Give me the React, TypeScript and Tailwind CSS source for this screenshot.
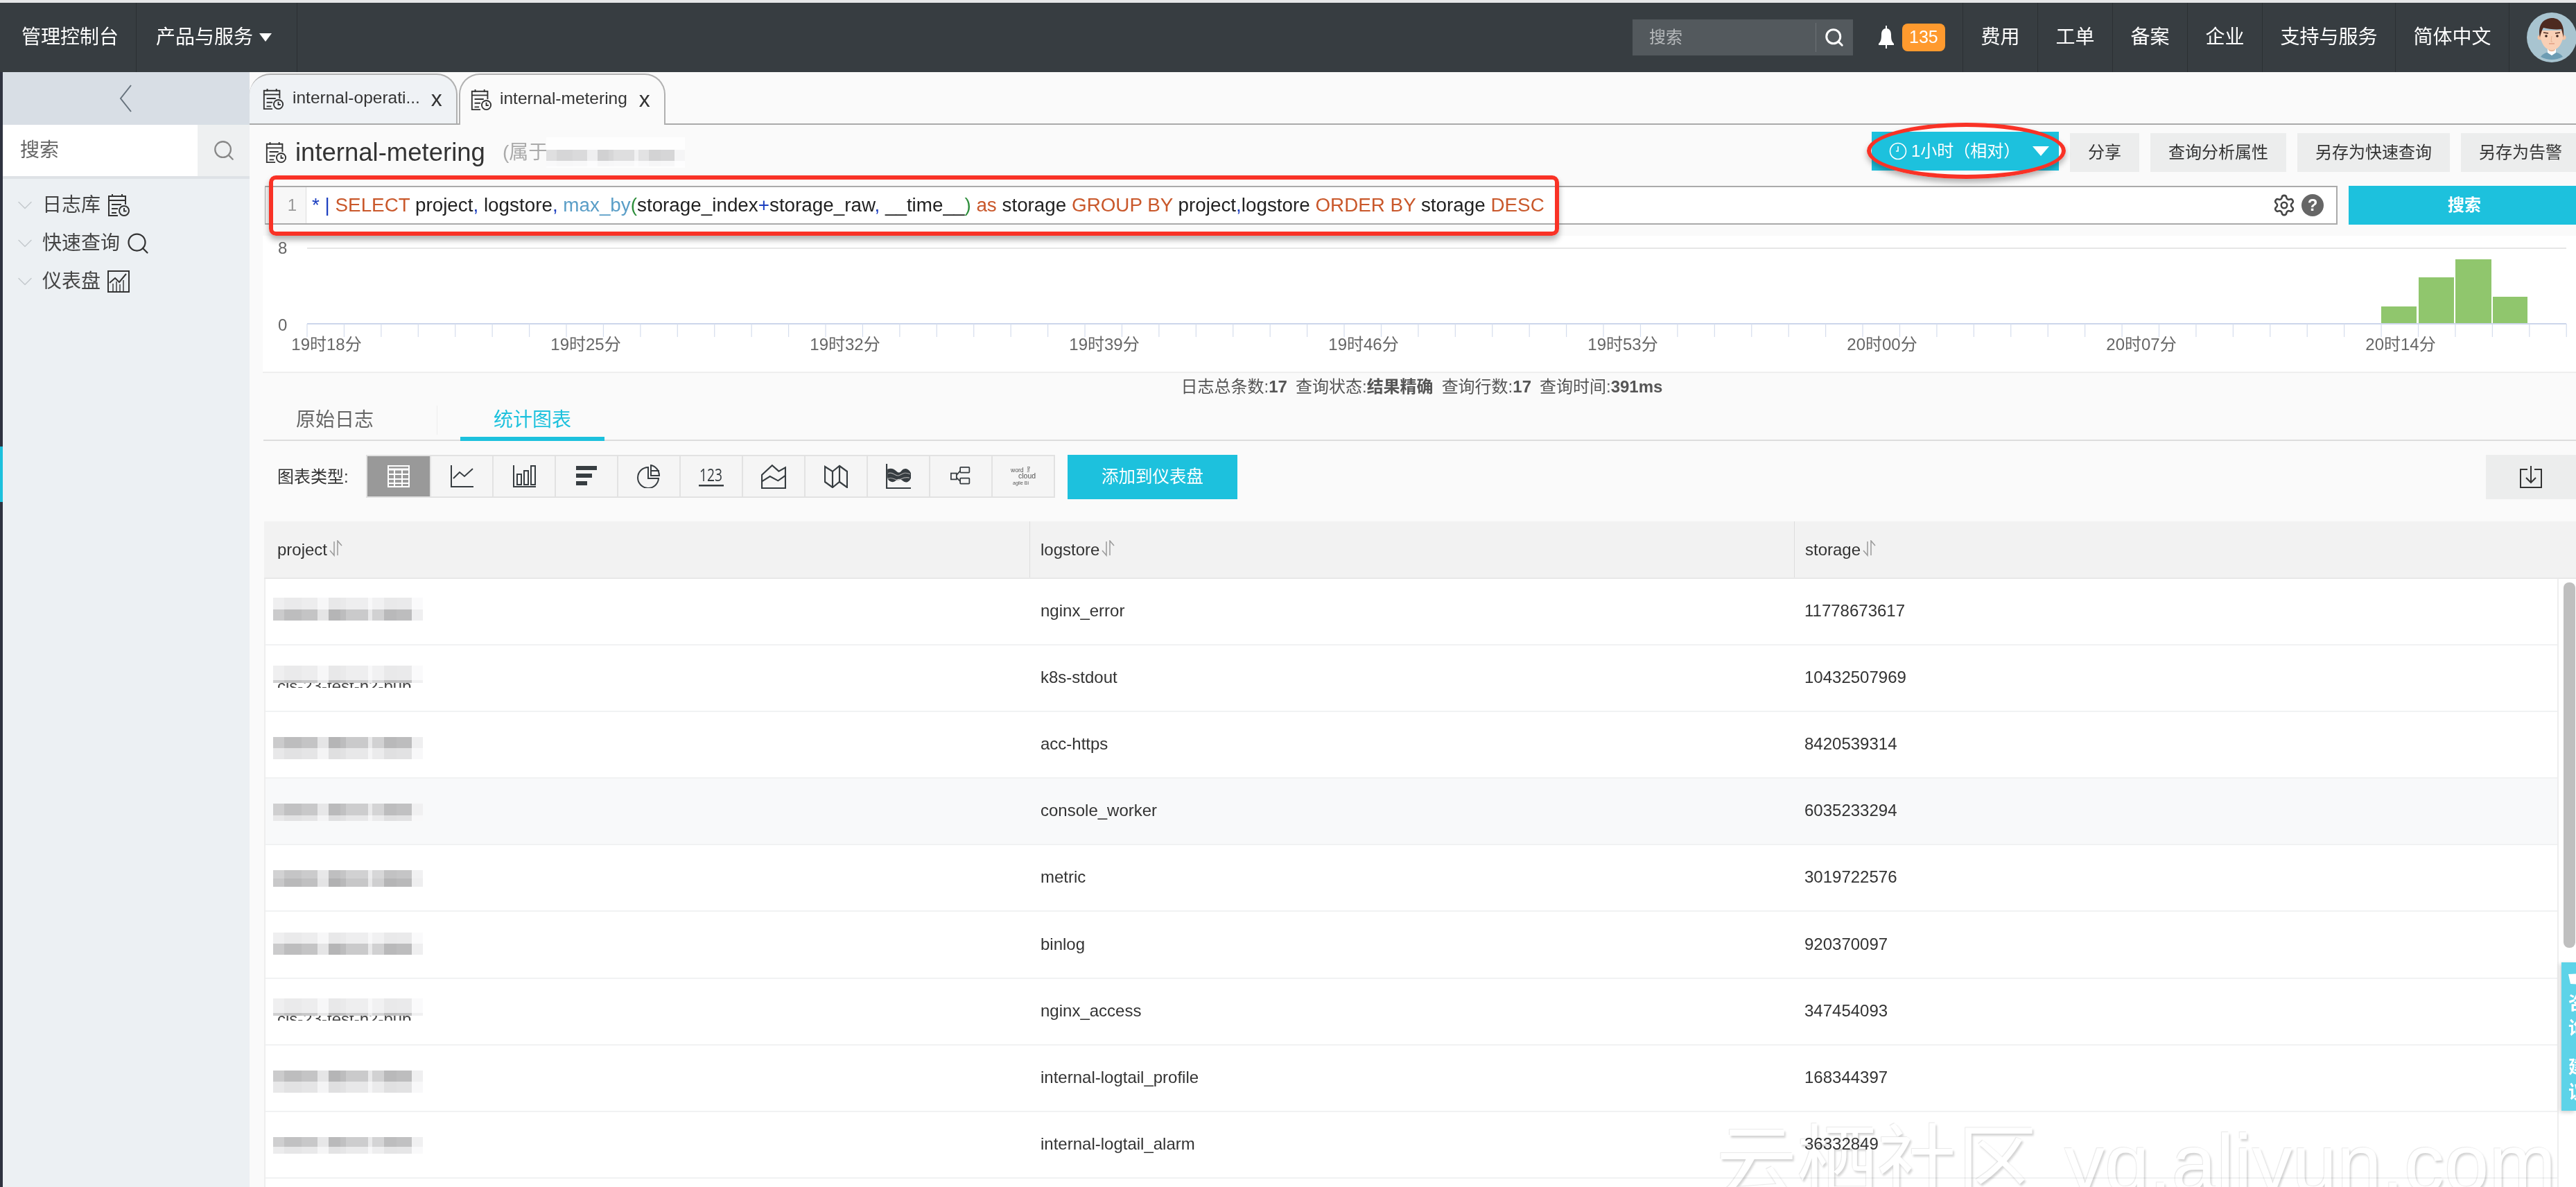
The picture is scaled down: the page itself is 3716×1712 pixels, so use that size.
import { Search, Settings, ChevronDown } from 'lucide-react'

const navItems = ['费用', '工单', '备案', '企业', '支持与服务', '简体中文']

const rows = [
  { store: 'nginx_error', size: '11778673617', top: 0.25, bot: 0.8, th: 17, bh: 16, shift: -7 },
  { store: 'k8s-stdout', size: '10432507969', top: 0.25, bot: 0.75, th: 21, bh: 4, shift: -4, peek: true },
  { store: 'acc-https', size: '8420539314', top: 0.8, bot: 0.35, th: 16, bh: 16, shift: 10 },
  { store: 'console_worker', size: '6035233294', top: 0.75, bot: 0.35, th: 17, bh: 8, shift: 3, alt: true },
  { store: 'metric', size: '3019722576', top: 0.7, bot: 0.85, th: 12, bh: 12, shift: 2 },
  { store: 'binlog', size: '920370097', top: 0.25, bot: 0.8, th: 16, bh: 16, shift: -4 },
  { store: 'nginx_access', size: '347454093', top: 0.25, bot: 0.75, th: 21, bh: 4, shift: -6, peek: true },
  { store: 'internal-logtail_profile', size: '168344397', top: 0.8, bot: 0.35, th: 16, bh: 16, shift: 10 },
  { store: 'internal-logtail_alarm', size: '36332849', top: 0.75, bot: 0.3, th: 14, bh: 10, shift: 2 },
  { store: '', size: '', top: 0, bot: 0, th: 0, bh: 0, shift: 0 },
]

// widths and strengths of the mosaic tiles over the project names
const tiles = [
  [16, 0.7], [25, 0.9], [23, 0.8], [16, 0.35], [17, 1], [8, 0.9], [32, 0.72], [6, 0.3], [17, 0.62], [18, 0.95], [22, 0.9], [16, 0.22],
]

const labels = ['19时18分', '19时25分', '19时32分', '19时39分', '19时46分', '19时53分', '20时00分', '20时07分', '20时14分']
const ticks = Array.from({ length: 62 }, (_, i) => 64 + i * 53.43)

function Mosaic({ top, bot, th, bh, shift }: { top: number; bot: number; th: number; bh: number; shift: number }) {
  const paint = (base: number, k: number) => {
    const v = Math.round(255 - 92 * base * k)
    return `rgb(${v},${v},${v + 1})`
  }
  return (
    <div className="flex flex-col" style={{ marginTop: shift }}>
      <div className="flex">
        {tiles.map(([w, k], i) => (
          <div key={i} style={{ width: w, height: th, backgroundColor: paint(top, k) }} />
        ))}
      </div>
      <div className="flex">
        {tiles.map(([w, k], i) => (
          <div key={i} style={{ width: w, height: bh, backgroundColor: paint(bot, k) }} />
        ))}
      </div>
    </div>
  )
}

function LogIcon({ className = 'w-[32px] h-[34px]' }: { className?: string }) {
  return (
    <svg viewBox="0 0 32 34" className={className} fill="none" stroke="#333" strokeWidth="2">
      <path d="M15 32H2V4h24v12" />
      <path d="M7 1v4M21 1v4M2 10h24M6 16h14M6 22h9M6 28h7" />
      <circle cx="24" cy="25" r="7" />
      <path d="M24 21v4.5h3.5" />
    </svg>
  )
}

function SortIcon() {
  return (
    <svg viewBox="0 0 24 24" className="ml-[1px] -mt-[4px] h-[24px] w-[24px]" fill="none" stroke="#999" strokeWidth="1.5">
      <path d="M9 2v20L3 15" />
      <path d="M14 22V1l6 7" />
    </svg>
  )
}

function TypeIcon({ kind }: { kind: number }) {
  const c = '#373d41'
  const common = { viewBox: '0 0 34 34', className: 'w-[34px] h-[34px]', fill: 'none', stroke: c, strokeWidth: 2 }
  if (kind === 0)
    return (
      <svg {...common} stroke="#fff">
        <rect x="2" y="2" width="30" height="30" />
        <path d="M2 7h30" strokeWidth="3" />
        <path d="M2 14h30M2 21h30M2 27h30M11 8v24M22 8v24" strokeWidth="2" />
      </svg>
    )
  if (kind === 1)
    return (
      <svg {...common}>
        <path d="M2 1v31h32" />
        <path d="M5 20l9-9 7 6 12-11" />
      </svg>
    )
  if (kind === 2)
    return (
      <svg {...common}>
        <path d="M2 1v31h32" />
        <rect x="7" y="14" width="6" height="15" />
        <rect x="17" y="9" width="6" height="20" />
        <rect x="27" y="2" width="6" height="27" />
      </svg>
    )
  if (kind === 3)
    return (
      <svg {...common} fill={c} stroke="none">
        <rect x="2" y="2" width="30" height="6" />
        <rect x="2" y="13" width="23" height="6" />
        <rect x="2" y="24" width="16" height="6" />
      </svg>
    )
  if (kind === 4)
    return (
      <svg {...common}>
        <path d="M16 4a15 15 0 1 0 15 16H16z" />
        <path d="M20 1v15h12a15 15 0 0 0-12-15zM20 9h12" />
      </svg>
    )
  if (kind === 5)
    return (
      <svg viewBox="0 0 36 34" className="h-[34px] w-[36px]">
        <text x="1" y="24" fontSize="25" fill={c} fontFamily="'Open Sans', sans-serif" textLength="33" lengthAdjust="spacingAndGlyphs">123</text>
        <rect x="0" y="29" width="36" height="2.5" fill={c} />
      </svg>
    )
  if (kind === 6)
    return (
      <svg {...common} className="h-[36px] w-[36px]">
        <path d="M1 33V15L15 2l9 8 9-5v28z" />
        <path d="M1 24l11-7 11 6 10-7" />
      </svg>
    )
  if (kind === 7)
    return (
      <svg {...common} className="h-[34px] w-[34px]" strokeWidth="2.2">
        <path d="M1 3l11 7 10-8 11 8v23l-11-8-10 8-11-8z" />
        <path d="M12 10v23M22 2v23" />
      </svg>
    )
  if (kind === 8)
    return (
      <svg {...common} className="h-[36px] w-[36px]">
        <path d="M1 0v33h35" />
        <path d="M3 8c5-2 8 0 11 3s6 2 8-1 8-5 12 5c-1 9-7 11-11 7s-7-3-10 0-9 2-10-4z" fill={c} />
        <path d="M3 13c6-3 10 4 14 3s8-6 16-2M3 20c6-3 10 3 14 2s8-5 15-3" stroke="#aaa" strokeWidth="1" />
      </svg>
    )
  if (kind === 9)
    return (
      <svg {...common} className="h-[30px] w-[32px]">
        <rect x="1" y="12" width="9" height="10" />
        <rect x="16" y="2" width="15" height="9" rx="1" />
        <rect x="16" y="20" width="15" height="9" rx="1" />
        <path d="M10 15l6-7M10 19l6 6" />
      </svg>
    )
  return (
    <svg viewBox="0 0 40 34" className="h-[34px] w-[40px]" fontFamily="'Liberation Sans', sans-serif" fill="#555">
      <text x="2" y="11" fontSize="8.6">word</text>
      <text x="13" y="20" fontSize="10.5">cloud</text>
      <text x="5" y="29" fontSize="7">agile Bi</text>
      <text fontSize="6" transform="translate(29 11) rotate(-90)">tag</text>
    </svg>
  )
}

function Avatar() {
  return (
    <svg viewBox="0 0 72 72" className="h-[72px] w-[72px] shrink-0">
      <circle cx="36" cy="36" r="36" fill="#a8c4d0" />
      <path d="M20 64c4-6 10-7 16-7s12 1 16 7a36 36 0 0 1-32 0z" fill="#6d9cb3" />
      <path d="M30 50h12v8l-6 4-6-4z" fill="#fff" />
      <path d="M31 48h10v6c-2 3-8 3-10 0z" fill="#eab89a" />
      <circle cx="19" cy="36" r="3.5" fill="#f3c3a4" />
      <circle cx="53" cy="36" r="3.5" fill="#f3c3a4" />
      <path d="M19 26c0 18 7 28 17 28s17-10 17-28z" fill="#f9d0b6" />
      <path d="M19 36c-3-14 1-26 16-28 11-1 20 7 18 28-1-4-2-8-3-12-8 1-18 0-26-2-2 3-4 9-5 14z" fill="#4d2a20" />
      <circle cx="28" cy="34" r="1.8" fill="#3a211a" />
      <circle cx="44" cy="34" r="1.8" fill="#3a211a" />
      <path d="M24 29l7 1M48 29l-7 1" stroke="#4d2a20" strokeWidth="1.4" />
      <path d="M36 34l-1 8h2" stroke="#e0a988" strokeWidth="0.8" fill="none" />
      <path d="M32 45h8" stroke="#e09c80" strokeWidth="1.4" />
    </svg>
  )
}

function Token({ c, children }: { c: 'k' | 'f' | 'p' | 'g'; children: string }) {
  if (c === 'k') return <span className="text-[#c9582b]">{children}</span>
  if (c === 'f') return <span className="text-[#5a9ec7]">{children}</span>
  if (c === 'p') return <span className="text-[#1c3fc0]">{children}</span>
  return <span className="text-[#2f8f3d]">{children}</span>
}

export default function App() {
  return (
    <div className="relative flex h-[1712px] w-[3716px] flex-col overflow-hidden bg-[#fafafa] font-['Liberation_Sans','Noto_Sans_CJK_SC',sans-serif] text-[24px] text-[#333]">
      <div className="h-[4px] shrink-0 bg-[#e6e7e8]" />

      {/* top nav */}
      <header className="flex h-[100px] shrink-0 items-center bg-[#373d41] text-[28px] text-white">
        <div className="flex h-full w-[197px] items-center border-r border-[#2b3033] pl-[31px]">管理控制台</div>
        <div className="flex h-full w-[232px] items-center border-r border-[#2b3033] pl-[28px]">
          产品与服务
          <svg viewBox="0 0 18 14" className="ml-[9px] h-[14px] w-[18px]">
            <path d="M0 1h18L9 13z" fill="#fff" />
          </svg>
        </div>
        <div className="ml-auto flex h-full items-center">
          <div className="flex h-[52px] w-[318px] items-center bg-[#53595d] text-[24px] text-[#b5b8ba]">
            <span className="flex-1 pl-[24px]">搜索</span>
            <div className="flex h-[42px] w-[54px] items-center justify-center border-l border-[#6d7276]">
              <Search className="h-[30px] w-[30px] text-white" strokeWidth={2.4} />
            </div>
          </div>
          <svg viewBox="0 0 28 34" className="ml-[34px] h-[34px] w-[28px]">
            <path d="M14 4c-4 0-7 3-7 9 0 7-1 10-4 13v2h22v-2c-3-3-4-6-4-13 0-6-3-9-7-9z" fill="#fff" />
            <rect x="13" y="0" width="2" height="5" fill="#fff" />
            <rect x="13" y="28" width="2" height="5" fill="#fff" />
          </svg>
          <div className="ml-[9px] flex h-[40px] w-[62px] items-center justify-center rounded-[8px] bg-[#ff9a2e] text-[25px]">135</div>
          <nav className="ml-[25px] flex h-full">
            {navItems.map(item => (
              <div key={item} className="flex items-center border-l border-[#2b3033] px-[25.5px]">
                {item}
              </div>
            ))}
          </nav>
          <div className="flex h-full w-[97px] items-center border-l border-[#2b3033] pl-[25px]">
            <Avatar />
          </div>
        </div>
      </header>

      <div className="flex min-h-0 flex-1">
        {/* left strip */}
        <div className="flex w-[4px] shrink-0 flex-col bg-[#2f3340]">
          <div className="mt-[540px] h-[80px] bg-[#1dc1dd]" />
        </div>

        {/* sidebar */}
        <aside className="w-[356px] shrink-0 bg-[#ecf0f3]">
          <div className="flex h-[76px] items-center justify-center bg-[#d8dee5] pr-[2px]">
            <svg viewBox="0 0 20 40" className="h-[40px] w-[20px]" fill="none" stroke="#66727c" strokeWidth="2">
              <path d="M18 1L3 20l15 19" />
            </svg>
          </div>
          <div className="flex h-[78px] border-b-[4px] border-[#dee2e6] bg-white">
            <div className="flex flex-1 items-center pl-[25px] text-[28px] text-[#666]">搜索</div>
            <div className="flex w-[75px] items-center justify-center bg-[#eef0f1]">
              <Search className="h-[34px] w-[34px] text-[#888]" strokeWidth={1.6} />
            </div>
          </div>
          <div className="flex flex-col pt-[10px] text-[28px] text-[#444]">
            <div className="flex h-[56px] items-center pl-[14px]">
              <ChevronDown className="h-[36px] w-[36px] text-[#c4c9cd]" strokeWidth={1} />
              <span className="ml-[7px]">日志库</span>
              <LogIcon className="ml-[10px] h-[34px] w-[32px]" />
            </div>
            <div className="flex h-[54px] items-center pl-[14px]">
              <ChevronDown className="h-[36px] w-[36px] text-[#c4c9cd]" strokeWidth={1} />
              <span className="ml-[7px]">快速查询</span>
              <Search className="ml-[8px] h-[36px] w-[36px] text-[#333]" strokeWidth={1.5} />
            </div>
            <div className="flex h-[56px] items-center pl-[14px]">
              <ChevronDown className="h-[36px] w-[36px] text-[#c4c9cd]" strokeWidth={1} />
              <span className="ml-[7px]">仪表盘</span>
              <svg viewBox="0 0 32 32" className="ml-[10px] h-[32px] w-[32px]" fill="none" stroke="#333" strokeWidth="2">
                <rect x="1" y="1" width="30" height="30" />
                <path d="M3 18l8-7 6 6 10-12" />
                <path d="M8 30V19M13 30V16M18 30V20M23 30V14" strokeWidth="1.4" />
              </svg>
            </div>
          </div>
        </aside>

        {/* main */}
        <main className="flex min-w-0 flex-1 flex-col">
          <div className="flex h-[76px] shrink-0 items-end gap-[2px] border-b-2 border-[#aaa]">
            <div className="flex h-[72px] w-[300px] items-center rounded-tl-[30px] rounded-tr-[30px] border-r-2 border-t-2 border-[#b0b0b0] bg-[#eff2f5] pl-[18px]">
              <LogIcon className="h-[32px] w-[32px]" />
              <span className="ml-[12px] -mt-[4px] text-[24.5px]">internal-operati...</span>
              <span className="ml-[16px] -mt-[2px] text-[32px] leading-none">x</span>
            </div>
            <div className="-mb-[2px] flex h-[74px] w-[298px] items-center rounded-tl-[30px] rounded-tr-[30px] border-x-2 border-t-2 border-[#b0b0b0] bg-[#fafafa] pl-[14px]">
              <LogIcon className="h-[32px] w-[32px]" />
              <span className="ml-[11px] -mt-[4px] text-[24.5px]">internal-metering</span>
              <span className="ml-[17px] -mt-[2px] text-[32px] leading-none">x</span>
            </div>
          </div>

          <div className="flex h-[88px] shrink-0 items-start pl-[22px] pt-[12px]">
            <div className="flex h-[56px] flex-1 items-center">
              <LogIcon className="h-[32px] w-[32px]" />
              <span className="ml-[12px] text-[36.5px]">internal-metering</span>
              <span className="ml-[25px] text-[28px] text-[#aaa]">(属于</span>
              <div className="-ml-[2px] flex h-[44px] w-[200px] flex-col bg-white/70">
                <div className="h-[18px]" />
                <Mosaic top={0.5} bot={0.1} th={16} bh={8} shift={0} />
              </div>
            </div>
            <div className="-mr-[6px] flex shrink-0 gap-[16px]">
              <div className="-mt-[2px] flex h-[56px] w-[270px] items-center bg-[#1dc1dd] pl-[25px] text-white">
                <svg viewBox="0 0 26 26" className="h-[26px] w-[26px]" fill="none" stroke="#fff" strokeWidth="1.6">
                  <circle cx="13" cy="13" r="11.5" />
                  <path d="M13 6v7h-3" />
                </svg>
                <span className="ml-[6px]">1小时（相对）</span>
                <svg viewBox="0 0 24 14" className="ml-[18px] h-[14px] w-[24px]">
                  <path d="M0 0h24L12 14z" fill="#fff" />
                </svg>
              </div>
              {['分享', '查询分析属性', '另存为快速查询', '另存为告警'].map(t => (
                <div key={t} className="flex h-[56px] items-center bg-[#eceded] px-[26px]">
                  {t}
                </div>
              ))}
            </div>
          </div>

          <div className="flex h-[72px] shrink-0 items-start pl-[22px]">
            <div className="flex h-[56px] w-[2990px] items-center border-y-2 border-r-2 border-l border-[#aaa] bg-white">
              <div className="flex h-full w-[59px] items-center justify-end border-r border-[#ddd] bg-[#f7f7f7] pr-[13px] text-[#999]">1</div>
              <div className="flex-1 whitespace-pre pl-[8px] text-[27.82px] text-[#222]">
                <Token c="p">*</Token> <Token c="p">|</Token> <Token c="k">SELECT</Token> project<Token c="p">,</Token> logstore<Token c="p">,</Token> <Token c="f">max_by</Token><Token c="g">(</Token>storage_index<Token c="p">+</Token>storage_raw<Token c="p">,</Token> __time__<Token c="g">)</Token> <Token c="k">as</Token> storage <Token c="k">GROUP BY</Token> project<Token c="p">,</Token>logstore <Token c="k">ORDER BY</Token> storage <Token c="k">DESC</Token>
              </div>
              <Settings className="h-[34px] w-[34px] text-[#444]" strokeWidth={1.8} />
              <div className="ml-[8px] mr-[18px] flex h-[32px] w-[32px] items-center justify-center rounded-full bg-[#666] text-[24px] font-bold text-white">?</div>
            </div>
            <div className="ml-[16px] flex h-[56px] flex-1 items-center justify-center bg-[#1dc1dd] pl-[6px] font-bold text-white">搜索</div>
          </div>

          {/* histogram */}
          <div className="ml-[19px] h-[198px] shrink-0 border-b-2 border-[#eee] bg-white">
            <svg viewBox="0 0 3337 196" className="h-[196px] w-[3337px]" fontFamily="'Liberation Sans','Noto Sans CJK SC',sans-serif">
              <text x="22" y="26" fontSize="24" fill="#666">8</text>
              <text x="22" y="137" fontSize="24" fill="#666">0</text>
              <line x1="64" y1="18" x2="3323" y2="18" stroke="#e6e6e6" strokeWidth="2" />
              <rect x="3056" y="102" width="51" height="24" fill="#90c66d" />
              <rect x="3110" y="60" width="51" height="66" fill="#90c66d" />
              <rect x="3163" y="34" width="52" height="92" fill="#90c66d" />
              <rect x="3217" y="88" width="50" height="38" fill="#90c66d" />
              <line x1="64" y1="127" x2="3323" y2="127" stroke="#ccd6eb" strokeWidth="2" />
              {ticks.map(x => (
                <line key={x} x1={x} y1="127" x2={x} y2="146" stroke="#d5dded" strokeWidth="1.2" />
              ))}
              {labels.map((l, i) => (
                <text key={l} x={92 + i * 374} y="165" fontSize="24" fill="#666" textAnchor="middle">{l}</text>
              ))}
            </svg>
          </div>

          <div className="flex h-[40px] shrink-0 items-center justify-center pl-[26px] text-[#555]">
            <span>日志总条数:<b>17</b></span>
            <span className="ml-[12px]">查询状态:<b>结果精确</b></span>
            <span className="ml-[12px]">查询行数:<b>17</b></span>
            <span className="ml-[12px]">查询时间:<b>391ms</b></span>
          </div>

          <div className="ml-[20px] flex h-[58px] shrink-0 items-center border-b-2 border-[#ddd] text-[28px]">
            <div className="w-[251px] border-r border-[#eee] pl-[47px] text-[#666]">原始日志</div>
            <div className="relative ml-[33px] flex h-full w-[208px] items-center justify-center text-[#1dc1dd]">
              统计图表
              <div className="absolute -bottom-[2px] left-0 h-[6px] w-full bg-[#1dc1dd]" />
            </div>
          </div>

          <div className="flex h-[116px] shrink-0 items-start pl-[40px] pt-[20px]">
            <span className="mt-[14px] w-[128px]">图表类型:</span>
            <div className="flex h-[62px] border-2 border-[#e2e2e2] bg-[#f5f5f5]">
              {[0, 1, 2, 3, 4, 5, 6, 7, 8, 9, 10].map(k => (
                <div
                  key={k}
                  className={k === 0 ? 'flex w-[90px] items-center justify-center bg-[#999]' : 'flex w-[90px] items-center justify-center border-l-2 border-[#e2e2e2]'}
                >
                  <TypeIcon kind={k} />
                </div>
              ))}
            </div>
            <div className="ml-[18px] flex h-[64px] w-[245px] items-center justify-center bg-[#1dc1dd] text-[24.5px] text-white">添加到仪表盘</div>
            <div className="ml-auto flex h-[64px] w-[130px] items-center justify-center bg-[#eceded]">
              <svg viewBox="0 0 32 32" className="h-[32px] w-[32px]" fill="none" stroke="#333" strokeWidth="2">
                <path d="M11 5H1v26h30V5H21" />
                <path d="M16 0v24M9 17l7 7 7-7" />
              </svg>
            </div>
          </div>

          {/* table */}
          <div className="ml-[21px] grid h-[83px] shrink-0 grid-cols-[1104px_1103px_1fr] border-b-2 border-[#e8e8e8] bg-[#f2f2f2]">
            {['project', 'logstore', 'storage'].map((h, i) => (
              <div key={h} className={i === 0 ? 'flex items-center pl-[19px]' : 'flex items-center border-l border-[#ddd] pl-[15px]'}>
                {h}
                <SortIcon />
              </div>
            ))}
          </div>
          <div className="ml-[21px] flex min-h-0 flex-1">
            <div className="flex-1 border-l-2 border-[#eee] bg-white">
              {rows.map((r, i) => (
                <div
                  key={i}
                  className={r.alt ? 'grid h-[96.1px] grid-cols-[1102px_1103px_1fr] border-b-2 border-[#f1f2f3] bg-[#f8f9fa]' : 'grid h-[96.1px] grid-cols-[1102px_1103px_1fr] border-b-2 border-[#f1f2f3]'}
                >
                  <div className="flex flex-col justify-center pl-[11px]">
                    {r.th > 0 && <Mosaic top={r.top} bot={r.bot} th={r.th} bh={r.bh} shift={r.shift} />}
                    {r.peek && <div className="h-[7px] overflow-hidden pl-[6px] text-[#444]"><div className="-mt-[13px]">cls-23-test-h2-pub</div></div>}
                  </div>
                  <div className="flex items-center pl-[16px] -mt-[2px]">{r.store}</div>
                  <div className="flex items-center pl-[15px] -mt-[2px]">{r.size}</div>
                </div>
              ))}
            </div>
            <div className="w-[27px] shrink-0 border-l-2 border-[#eee] bg-white pl-[7px] pt-[5px]">
              <div className="h-[527px] w-[17px] rounded-[8px] bg-[#bfbfbf]" />
            </div>
          </div>
        </main>
      </div>

      {/* annotation marks */}
      <div className="absolute left-[388px] top-[253px] h-[87px] w-[1861px] rounded-[10px] border-[6px] border-[#f93226] shadow-[0_6px_8px_rgba(0,0,0,0.3)]" />
      <div className="absolute left-[2693px] top-[177px] h-[81px] w-[287px] rounded-[50%] border-[6px] border-[#f93226] shadow-[0_5px_8px_rgba(0,0,0,0.3)]" />

      {/* feedback tab */}
      <div className="absolute left-[3695px] top-[1388px] flex h-[214px] w-[21px] flex-col overflow-hidden bg-[#5dd3e8] pl-[10px] pt-[16px] text-[26px] font-bold leading-[36px] text-white shadow-[-2px_2px_6px_rgba(0,0,0,0.2)]">
        <svg viewBox="0 0 20 16" className="mb-[9px] h-[16px] w-[20px] shrink-0">
          <path d="M0 1l20-1v16L3 15z" fill="#fff" />
        </svg>
        <span>咨</span>
        <span>询</span>
        <span className="h-[20px]" />
        <span>建</span>
        <span>议</span>
      </div>

      {/* watermark */}
      <div className="absolute left-[2476px] top-[1620px] flex whitespace-nowrap text-[116px] leading-none text-white mix-blend-multiply [text-shadow:2px_3px_3px_#d4d4d4,-1px_-1px_1px_#e8e8e8]">
        <span>云栖社区</span>
        <span className="ml-[38px]">yq.aliyun.com</span>
      </div>
    </div>
  )
}
